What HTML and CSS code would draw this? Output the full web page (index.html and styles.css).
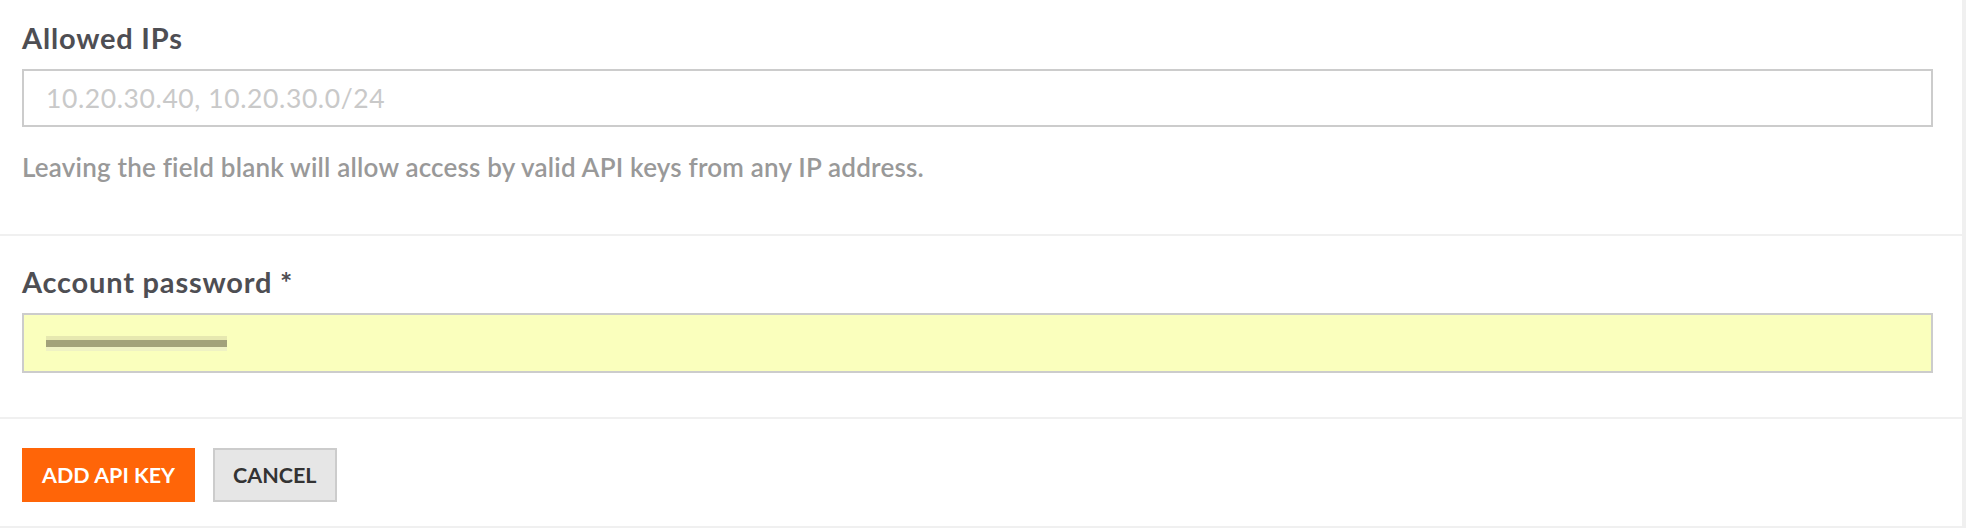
FILE: index.html
```html
<!DOCTYPE html>
<html lang="en">
<head>
    <meta charset="UTF-8">
    <meta name="viewport" content="width=device-width, initial-scale=1.0">
    <title>Add API Key</title>
    <link rel="stylesheet" href="styles.css">
</head>
<body>

    <div class="panel">
        <form id="apiKeyForm" onsubmit="return false">
            <div class="form-row form-row--first">
                <label for="allowed-ips">Allowed IPs</label>
                <input type="text" id="allowed-ips" name="allowed_ips" class="field" placeholder="10.20.30.40, 10.20.30.0/24">
                <p class="help">Leaving the field blank will allow access by valid API keys from any IP address.</p>
            </div>

            <div class="form-row">
                <label for="password">Account password *</label>
                <div class="field field--autofill" id="password">
                    <span class="masked"></span>
                </div>
            </div>

            <div class="form-actions">
                <button type="submit" class="btn btn-primary">Add API Key</button>
                <button type="reset" class="btn btn-secondary">Cancel</button>
            </div>
        </form>
    </div>

</body>
</html>
```

FILE: styles.css
```css
body {
    margin: 0;
    padding: 0;
    background: #fff;
    font-family: Lato, "Open Sans", sans-serif;
    color: #4e4e53;
}
.panel {
    height: 526px;
    border-right: 4px solid #f0f0f0;
    border-bottom: 2px solid #f0f0f0;
}
.form-row {
    padding: 30px 29px 44px 22px;
    border-bottom: 2px solid #f0f0f0;
}
.form-row--first {
    padding-top: 22px;
    padding-bottom: 52px;
}
label {
    display: block;
    font-size: 29px;
    line-height: 32px;
    font-weight: 700;
    letter-spacing: 0.8px;
    margin-bottom: 15px;
}
.field {
    display: block;
    width: 100%;
    height: 58px;
    margin: 0;
    padding: 0 22px;
    border: 2px solid #ccc;
    border-radius: 0;
    box-sizing: border-box;
    background: #fff;
    font-family: inherit;
    font-size: 26.5px;
    letter-spacing: 0.6px;
    color: #4e4e53;
    outline: none;
}
.field::placeholder {
    color: #c9c9c9;
}
.field--autofill {
    display: flex;
    align-items: center;
    height: 60px;
    background: #faffbd;
}
.masked {
    display: block;
    width: 181px;
    height: 7px;
    background: #a2a27a;
    box-shadow: 0 -4px 0 #e6e8b0, 0 4px 0 #eff2c4;
}
.help {
    margin: 25px 0 0;
    font-size: 26px;
    line-height: 30px;
    font-weight: 600;
    letter-spacing: 0.2px;
    color: #999;
}
.form-actions {
    display: flex;
    gap: 18px;
    padding: 29px 29px 0 22px;
}
.btn {
    height: 54px;
    padding: 0 20px;
    border: none;
    border-radius: 0;
    font-family: inherit;
    font-size: 21.5px;
    font-weight: 700;
    text-transform: uppercase;
    cursor: pointer;
}
.btn-primary {
    background-color: #ff6508;
    color: #fff;
}
.btn-secondary {
    padding: 0 18px;
    background-color: #e6e6e6;
    border: 2px solid #ccc;
    color: #333;
}
```
